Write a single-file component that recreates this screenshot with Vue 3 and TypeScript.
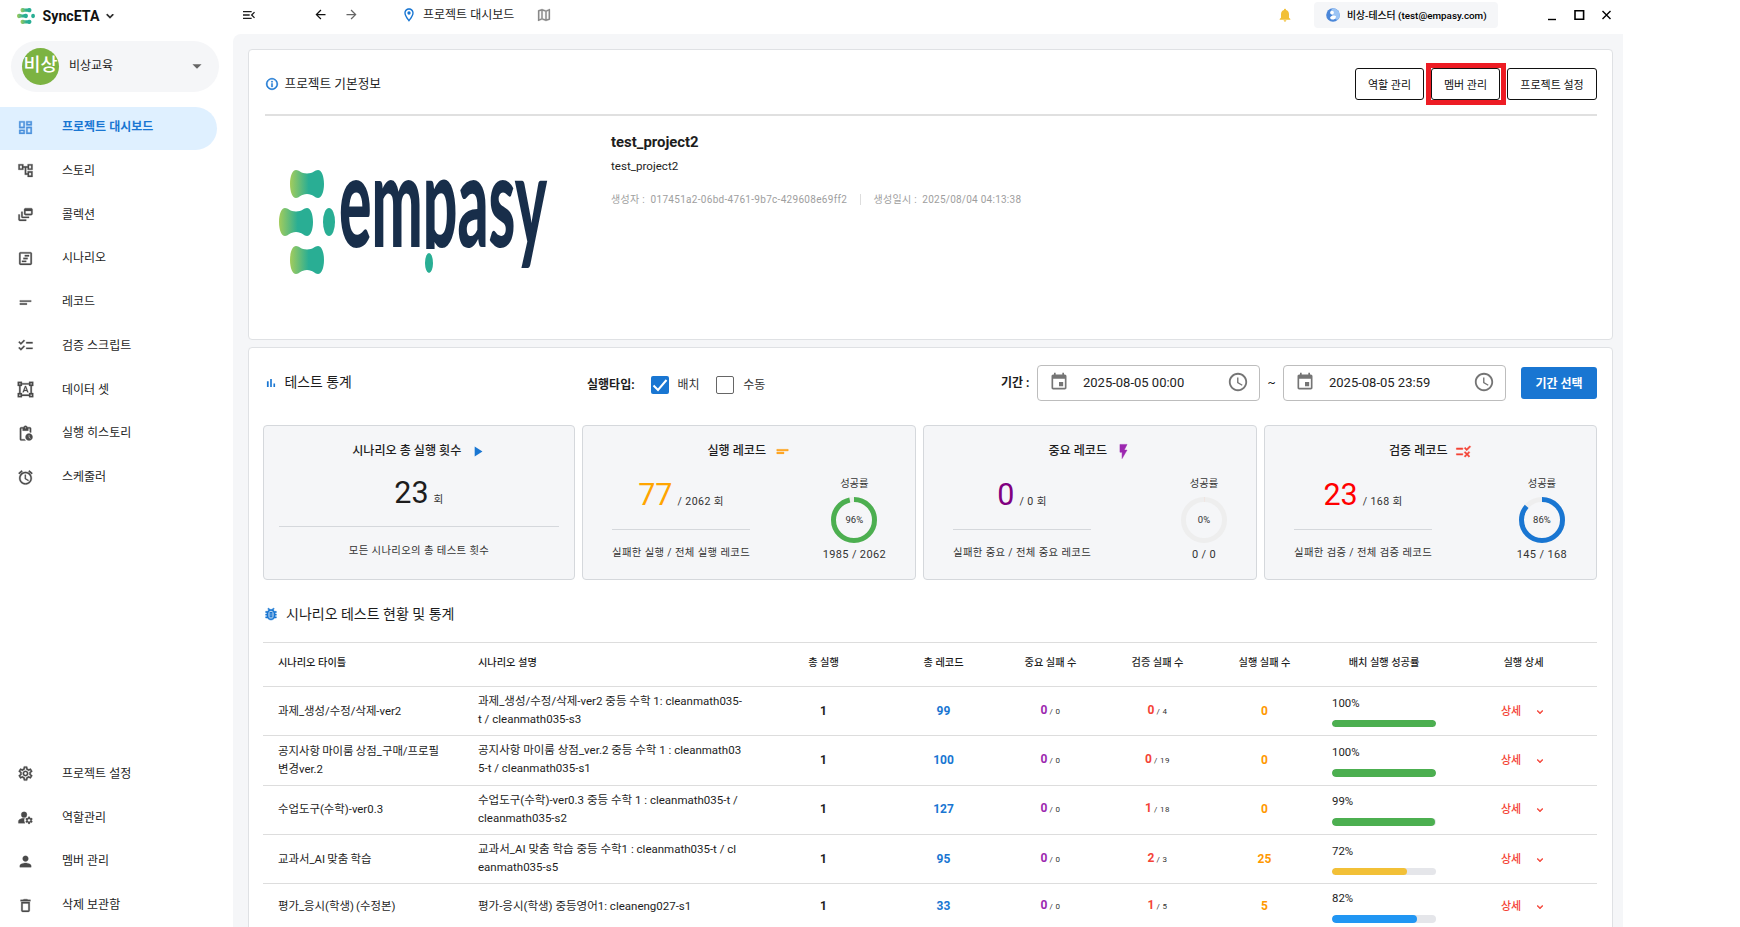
<script setup lang="ts">
interface NavItem { label: string; icon: string }
interface Scenario {
  title: string; desc: string[]; runs: number; records: number
  major: [number, number]; verify: [number, number]; failed: number
  rate: number; color: string
}
interface Stat {
  title: string; icon: string; tint: string; value: string; valueColor: string
  total: string; desc: string; rate: number; ratio: string
}

const icons: Record<string, string> = {
  dashboard: 'M19 5v2h-4V5h4M9 5v6H5V5h4m10 8v6h-4v-6h4M9 17v2H5v-2h4M21 3h-8v6h8V3zM11 3H3v10h8V3zm10 8h-8v10h8V11zm-10 4H3v6h8v-6z',
  tree: 'M22 11V3h-7v3H9V3H2v8h7V8h2v10h4v3h7v-8h-7v3h-2V8h2v3h7zM7 9H4V5h3v4zm10 6h3v4h-3v-4zm0-10h3v4h-3V5z',
  feed: 'M8 8H6v7c0 1.1.9 2 2 2h9v-2H8V8zM20 3h-8c-1.1 0-2 .9-2 2v6c0 1.1.9 2 2 2h8c1.1 0 2-.9 2-2V5c0-1.1-.9-2-2-2zm0 8h-8V7h8v4zM4 12H2v7c0 1.1.9 2 2 2h9v-2H4v-7z',
  scenario: 'M19 5v14H5V5h14m0-2H5c-1.1 0-2 .9-2 2v14c0 1.100.9 2 2 2h14c1.100 0 2-.9 2-2V5c0-1.100-.9-2-2-2zM11 7h6v2h-6zM9 11h6v2H9zM7 15h6v2H7z',
  short: 'M4 9h16v2H4zm0 4h10v2H4z',
  checklist: 'M22 7h-9v2h9V7zm0 8h-9v2h9v-2zM5.54 11L2 7.46l1.41-1.41 2.12 2.12 4.24-4.24 1.41 1.41L5.54 11zm0 8L2 15.46l1.41-1.41 2.12 2.12 4.24-4.24 1.41 1.41L5.54 19z',
  rule: 'M16.54 11L13 7.46l1.41-1.41 2.12 2.12 4.24-4.24 1.41 1.41L16.54 11zM11 7H2v2h9V7zm10 6.41L19.59 12 17 14.59 14.41 12 13 13.41 15.59 16 13 18.59 14.41 20 17 17.41 19.59 20 21 18.59 18.41 16 21 13.41zM11 15H2v2h9v-2z',
  shapes: 'M23 7V1h-6v2H7V1H1v6h2v10H1v6h6v-2h10v2h6v-6h-2V7h2zM3 3h2v2H3V3zm2 18H3v-2h2v2zm12-2H7v-2H5V7h2V5h10v2h2v10h-2v2zm4 2h-2v-2h2v2zM19 5V3h2v2h-2zm-5.27 9h-3.49l-.73 2H7.89l3.4-9h1.4l3.41 9h-1.63l-.74-2zm-3.04-1.26h2.61L12 8.91l-1.31 3.83z',
  pending: 'M17 12c-2.76 0-5 2.24-5 5s2.24 5 5 5 5-2.24 5-5-2.24-5-5-5zm1.65 7.35L16.5 17.2V14h1v2.79l1.85 1.85-.7.71zM18 3h-3.18C14.4 1.84 13.3 1 12 1s-2.4.84-2.82 2H6c-1.1 0-2 .9-2 2v15c0 1.1.9 2 2 2h6.11c-.59-.57-1.07-1.25-1.42-2H6V5h2v3h8V5h2v5.08c.71.1 1.38.31 2 .6V5c0-1.1-.9-2-2-2zm-6 2c-.55 0-1-.45-1-1s.45-1 1-1 1 .45 1 1-.45 1-1 1z',
  alarm: 'M22 5.72l-4.6-3.86-1.29 1.53 4.6 3.86L22 5.72zM7.88 3.39L6.6 1.86 2 5.71l1.29 1.53 4.59-3.85zM12.5 8H11v6l4.75 2.85.75-1.23-4-2.37V8zM12 4c-4.97 0-9 4.03-9 9s4.02 9 9 9c4.97 0 9-4.03 9-9s-4.03-9-9-9zm0 16c-3.87 0-7-3.13-7-7s3.13-7 7-7 7 3.13 7 7-3.13 7-7 7z',
  settings: 'M19.43 12.98c.04-.32.07-.64.07-.98 0-.34-.03-.66-.07-.98l2.11-1.65c.19-.15.24-.42.12-.64l-2-3.46c-.09-.16-.26-.25-.44-.25-.06 0-.12.01-.17.03l-2.49 1c-.52-.4-1.08-.73-1.69-.98l-.38-2.65C14.46 2.18 14.25 2 14 2h-4c-.25 0-.46.18-.49.42l-.38 2.65c-.61.25-1.17.59-1.69.98l-2.49-1c-.06-.02-.12-.03-.18-.03-.17 0-.34.09-.43.25l-2 3.46c-.13.22-.07.49.12.64l2.11 1.65c-.04.32-.07.65-.07.98 0 .33.03.66.07.98l-2.11 1.65c-.19.15-.24.42-.12.64l2 3.46c.09.16.26.25.44.25.06 0 .12-.01.17-.03l2.49-1c.52.4 1.08.73 1.69.98l.38 2.65c.03.24.24.42.49.42h4c.25 0 .46-.18.49-.42l.38-2.65c.61-.25 1.17-.59 1.69-.98l2.49 1c.06.02.12.03.18.03.17 0 .34-.09.43-.25l2-3.46c.12-.22.07-.49-.12-.64l-2.11-1.65zm-1.98-1.71c.04.31.05.52.05.73 0 .21-.02.43-.05.73l-.14 1.13.89.7 1.08.84-.7 1.21-1.27-.51-1.04-.42-.9.68c-.43.32-.84.56-1.25.73l-1.06.43-.16 1.13-.2 1.35h-1.4l-.19-1.35-.16-1.13-1.06-.43c-.43-.18-.83-.41-1.23-.71l-.91-.7-1.06.43-1.27.51-.7-1.21 1.08-.84.89-.7-.14-1.13c-.03-.31-.05-.54-.05-.74s.02-.43.05-.73l.14-1.13-.89-.7-1.08-.84.7-1.21 1.27.51 1.04.42.9-.68c.43-.32.84-.56 1.25-.73l1.06-.43.16-1.13.2-1.35h1.39l.19 1.35.16 1.13 1.06.43c.43.18.83.41 1.23.71l.91.7 1.06-.43 1.27-.51.7 1.21-1.07.85-.89.7.14 1.13zM12 8c-2.21 0-4 1.79-4 4s1.79 4 4 4 4-1.79 4-4-1.79-4-4-4zm0 6c-1.1 0-2-.9-2-2s.9-2 2-2 2 .9 2 2-.9 2-2 2z',
  manage: 'M10 4a4 4 0 1 0 0 8 4 4 0 1 0 0-8zM10.67 13.02C10.45 13.01 10.23 13 10 13c-2.42 0-4.68.67-6.61 1.82-.88.52-1.39 1.5-1.39 2.53V20h9.26A6.96 6.96 0 0 1 10 16c0-1.07.25-2.07.67-2.98zM20.75 16c0-.22-.03-.42-.06-.63l1.14-1.01-1-1.73-1.45.49c-.32-.27-.68-.48-1.08-.63L18 11h-2l-.3 1.49c-.4.15-.76.36-1.08.63l-1.45-.49-1 1.73 1.14 1.01c-.03.21-.06.41-.06.63s.03.42.06.63l-1.14 1.01 1 1.73 1.45-.49c.32.27.68.48 1.08.63L16 21h2l.3-1.49c.4-.15.76-.36 1.08-.63l1.45.49 1-1.73-1.14-1.01c.03-.21.06-.41.06-.63zM17 18c-1.1 0-2-.9-2-2s.9-2 2-2 2 .9 2 2-.9 2-2 2z',
  person: 'M12 12c2.21 0 4-1.79 4-4s-1.79-4-4-4-4 1.790-4 4 1.790 4 4 4zm0 2c-2.670 0-8 1.340-8 4v2h16v-2c0-2.660-5.330-4-8-4z',
  trash: 'M6 19c0 1.1.9 2 2 2h8c1.1 0 2-.9 2-2V7H6v12zM8 9h8v10H8V9zm7.5-5l-1-1h-5l-1 1H5v2h14V4z',
  event: 'M17 12h-5v5h5v-5zM16 1v2H8V1H6v2H5c-1.11 0-1.99.9-1.99 2L3 19c0 1.1.89 2 2 2h14c1.1 0 2-.9 2-2V5c0-1.1-.9-2-2-2h-1V1h-2zm3 18H5V8h14v11z',
  clock: 'M11.99 2C6.47 2 2 6.48 2 12s4.47 10 9.99 10C17.52 22 22 17.52 22 12S17.52 2 11.99 2zM12 20c-4.42 0-8-3.58-8-8s3.58-8 8-8 8 3.58 8 8-3.58 8-8 8zm.5-13H11v6l5.25 3.15.75-1.23-4.5-2.67z',
  bell: 'M12 22c1.1 0 2-.9 2-2h-4c0 1.1.89 2 2 2zm6-6v-5c0-3.07-1.64-5.64-4.5-6.32V4c0-.83-.67-1.5-1.5-1.5s-1.5.67-1.5 1.5v.68C7.63 5.36 6 7.92 6 11v5l-2 2v1h16v-1l-2-2z',
  map: 'M20.5 3l-.16.03L15 5.100 9 3 3.360 4.900c-.21.07-.36.25-.36.48V20.500c0 .28.22.5.5.5l.16-.03L9 18.900l6 2.100 5.640-1.900c.21-.07.36-.25.36-.48V3.500c0-.28-.22-.5-.5-.5zM10 5.470l4 1.400v11.660l-4-1.400V5.470zm-5 .99l3-1.010v11.700l-3 1.160V6.460zm14 11.080l-3 1.010V6.860l3-1.160v11.840z',
  place: 'M12 2C8.13 2 5 5.13 5 9c0 5.25 7 13 7 13s7-7.75 7-13c0-3.87-3.13-7-7-7zM7 9c0-2.76 2.24-5 5-5s5 2.24 5 5c0 2.88-2.88 7.19-5 9.88C9.92 16.21 7 11.85 7 9zM12 6.500a2.500 2.500 0 1 0 0 5 2.500 2.500 0 1 0 0-5z',
  info: 'M11 7h2v2h-2zm0 4h2v6h-2zm1-9C6.480 2 2 6.480 2 12s4.480 10 10 10 10-4.480 10-10S17.520 2 12 2zm0 18c-4.410 0-8-3.590-8-8s3.590-8 8-8 8 3.590 8 8-3.590 8-8 8z',
  menuOpen: 'M3 18h13v-2H3v2zm0-5h10v-2H3v2zm0-7v2h13V6H3zm18 9.590L17.420 12 21 8.410 19.590 7l-5 5 5 5L21 15.590z',
  back: 'M20 11H7.830l5.590-5.590L12 4l-8 8 8 8 1.410-1.410L7.830 13H20v-2z',
  forward: 'M12 4l-1.410 1.410L16.170 11H4v2h12.170l-5.580 5.590L12 20l8-8z',
  chevron: 'M7.410 8.590L12 13.170l4.590-4.580L18 10l-6 6-6-6 1.410-1.410z',
  dropdown: 'M7 10l5 5 5-5z',
  bars: 'M5 9.2h3V19H5zM10.6 5h2.8v14h-2.8zm5.6 8H19v6h-2.8z',
  play: 'M8 5v14l11-7z',
  flash: 'M7 2v11h3v9l7-12h-4l4-8z',
  bug: 'M20 8h-2.810c-.45-.78-1.070-1.450-1.820-1.960L17 4.410 15.590 3l-2.170 2.170C12.960 5.060 12.490 5 12 5s-.96.06-1.410.17L8.410 3 7 4.410l1.620 1.630C7.880 6.550 7.260 7.220 6.810 8H4v2h2.090c-.05.33-.09.66-.09 1v1H4v2h2v1c0 .34.04.67.09 1H4v2h2.810c1.040 1.790 2.970 3 5.190 3s4.150-1.210 5.190-3H20v-2h-2.090c.05-.33.09-.66.09-1v-1h2v-2h-2v-1c0-.34-.04-.67-.09-1H20V8zm-4 7c0 2.200-1.800 4-4 4s-4-1.800-4-4v-4c0-2.200 1.800-4 4-4s4 1.800 4 4v4zM10 9h4v8h-4zM11.500 10.500v5h1v-5z',
}

const mainNav: NavItem[] = [
  { label: '프로젝트 대시보드', icon: 'dashboard' },
  { label: '스토리', icon: 'tree' },
  { label: '콜렉션', icon: 'feed' },
  { label: '시나리오', icon: 'scenario' },
  { label: '레코드', icon: 'short' },
  { label: '검증 스크립트', icon: 'checklist' },
  { label: '데이터 셋', icon: 'shapes' },
  { label: '실행 히스토리', icon: 'pending' },
  { label: '스케줄러', icon: 'alarm' },
]
const footNav: NavItem[] = [
  { label: '프로젝트 설정', icon: 'settings' },
  { label: '역할관리', icon: 'manage' },
  { label: '멤버 관리', icon: 'person' },
  { label: '삭제 보관함', icon: 'trash' },
]
const stats: Stat[] = [
  { title: '실행 레코드', icon: 'short', tint: '#ff9800', value: '77', valueColor: '#ffa500', total: '/ 2062 회', desc: '실패한 실행 / 전체 실행 레코드', rate: 96, ratio: '1985 / 2062' },
  { title: '중요 레코드', icon: 'flash', tint: '#9c27b0', value: '0', valueColor: '#800080', total: '/ 0 회', desc: '실패한 중요 / 전체 중요 레코드', rate: 0, ratio: '0 / 0' },
  { title: '검증 레코드', icon: 'rule', tint: '#f44336', value: '23', valueColor: '#ff0000', total: '/ 168 회', desc: '실패한 검증 / 전체 검증 레코드', rate: 86, ratio: '145 / 168' },
]
const ringColor = (rate: number): string => (rate > 90 ? '#4caf50' : rate > 0 ? '#1976d2' : '#f3dcd4')
const ringLength = 2 * Math.PI * 20.5
const ringDash = (rate: number): string => `${(Math.max(rate, 0.4) / 100) * ringLength} ${ringLength}`

const headers = ['시나리오 타이틀', '시나리오 설명', '총 실행', '총 레코드', '중요 실패 수', '검증 실패 수', '실행 실패 수', '배치 실행 성공률', '실행 상세']
const rows: Scenario[] = [
  { title: '과제_생성/수정/삭제-ver2', desc: ['과제_생성/수정/삭제-ver2 중등 수학 1: cleanmath035-', 't / cleanmath035-s3'], runs: 1, records: 99, major: [0, 0], verify: [0, 4], failed: 0, rate: 100, color: '#4caf50' },
  { title: '공지사항 마이룸 상점_구매/프로필 변경ver.2', desc: ['공지사항 마이룸 상점_ver.2 중등 수학 1 : cleanmath03', '5-t / cleanmath035-s1'], runs: 1, records: 100, major: [0, 0], verify: [0, 19], failed: 0, rate: 100, color: '#4caf50' },
  { title: '수업도구(수학)-ver0.3', desc: ['수업도구(수학)-ver0.3 중등 수학 1 : cleanmath035-t /', 'cleanmath035-s2'], runs: 1, records: 127, major: [0, 0], verify: [1, 18], failed: 0, rate: 99, color: '#4caf50' },
  { title: '교과서_AI 맞춤 학습', desc: ['교과서_AI 맞춤 학습 중등 수학1 : cleanmath035-t / cl', 'eanmath035-s5'], runs: 1, records: 95, major: [0, 0], verify: [2, 3], failed: 25, rate: 72, color: '#f2c037' },
  { title: '평가_응시(학생) (수정본)', desc: ['평가-응시(학생) 중등영어1: cleaneng027-s1'], runs: 1, records: 33, major: [0, 0], verify: [1, 5], failed: 5, rate: 82, color: '#2196f3' },
]
</script>

<template>
  <div class="app">
    <aside class="side">
      <div class="brand">
        <svg class="brand-mark" viewBox="0 0 56 104" preserveAspectRatio="none">
          <use href="#mark" />
        </svg>
        <span>SyncETA</span>
        <svg class="i14" viewBox="0 0 24 24"><path :d="icons.chevron" stroke="currentColor" /></svg>
      </div>
      <div class="org">
        <span class="avatar">비상</span>
        <span class="org-name">비상교육</span>
        <svg class="i22" viewBox="0 0 24 24"><path :d="icons.dropdown" /></svg>
      </div>
      <nav class="nav">
        <a v-for="(n, i) in mainNav" :key="n.label" class="nav-item" :class="{ active: i === 0 }">
          <svg class="i17" viewBox="0 0 24 24"><path :d="icons[n.icon]" /></svg><span>{{ n.label }}</span>
        </a>
      </nav>
      <nav class="nav foot">
        <a v-for="n in footNav" :key="n.label" class="nav-item">
          <svg class="i17" viewBox="0 0 24 24"><path :d="icons[n.icon]" /></svg><span>{{ n.label }}</span>
        </a>
      </nav>
    </aside>

    <div class="body">
      <header class="top">
        <svg class="i16 t-menu" viewBox="0 0 24 24"><path :d="icons.menuOpen" /></svg>
        <svg class="i15 t-back" viewBox="0 0 24 24"><path :d="icons.back" /></svg>
        <svg class="i15 t-fwd" viewBox="0 0 24 24"><path :d="icons.forward" /></svg>
        <svg class="i16 t-pin" viewBox="0 0 24 24"><path :d="icons.place" /></svg>
        <span class="crumb">프로젝트 대시보드</span>
        <svg class="i16 t-map" viewBox="0 0 24 24"><path :d="icons.map" /></svg>
        <svg class="i16 t-bell" viewBox="0 0 24 24"><path :d="icons.bell" /></svg>
        <div class="user">
          <svg class="globe" viewBox="0 0 14 14">
            <circle cx="7" cy="7" r="6.8" fill="#4a86d8" />
            <path d="M7 .2A6.800 6.800 0 0 1 13.800 7c0 2-1 3.800-2.400 5C8 11 6 8 5 5 4.500 3 5.500 1 7 .2z" fill="#9cc4f4" />
            <circle cx="6" cy="4.600" r="1.900" fill="#fff" />
            <path d="M4 9.800c1-2 4-3 6-1.600 0 2-1.500 3.400-3.400 3.400C5.300 11.600 4.300 11 4 9.800z" fill="#fff" />
          </svg>
          <span>비상-테스터 (test@empasy.com)</span>
        </div>
        <svg class="win" viewBox="0 0 64 12" fill="none" stroke="#000">
          <path d="M0 10.500h8" stroke-width="1.400" />
          <path d="M27 1.800h8.600v8.400H27z" stroke-width="1.600" />
          <path d="M54.500 2l8 8m0-8l-8 8" stroke-width="1.400" />
        </svg>
      </header>

      <main class="main">
        <section class="card project">
          <div class="head">
            <svg class="i14 blue bold" viewBox="0 0 24 24"><path :d="icons.info" /></svg>
            <h2 class="h13">프로젝트 기본정보</h2>
            <div class="actions">
              <button>역할 관리</button>
              <button class="marked">멤버 관리</button>
              <button class="wide">프로젝트 설정</button>
            </div>
          </div>
          <div class="project-body">
            <svg class="logo" viewBox="0 0 272 110">
              <defs>
                <linearGradient id="leaf" x1="0" x2="1" y1="0" y2="0">
                  <stop offset="0" stop-color="#a3cc5c" />
                  <stop offset=".55" stop-color="#29ae94" />
                  <stop offset="1" stop-color="#29ae94" />
                </linearGradient>
                <path id="bone" d="M6 0C9 0 11 3.500 17 3.500S25 0 28 0c3.500 0 6 6 6 14s-2.500 14-6 14c-3 0-5-4-11-4S9 28 6 28C2.500 28 0 22 0 14S2.500 0 6 0z" />
                <g id="mark">
                  <use href="#bone" x="11" y="0" fill="url(#leaf)" />
                  <use href="#bone" x="0" y="38" fill="url(#leaf)" />
                  <use href="#bone" x="11" y="76" fill="url(#leaf)" />
                  <ellipse cx="50" cy="52" rx="6" ry="14" fill="#29ae94" />
                </g>
              </defs>
              <use href="#mark" />
              <g transform="translate(0 77) scale(1 2.120)">
                <text class="wordmark" x="60" y="0" textLength="208" lengthAdjust="spacingAndGlyphs">empasy</text>
              </g>
              <path d="M142 79h22v26h-22z" fill="#fff" />
              <ellipse cx="150" cy="93" rx="4" ry="10" fill="#29ae94" />
            </svg>
            <div class="about">
              <h1>test_project2</h1>
              <p>test_project2</p>
              <div class="meta">
                <span>생성자 :&nbsp; 017451a2-06bd-4761-9b7c-429608e69ff2</span>
                <i></i>
                <span>생성일시 :&nbsp; 2025/08/04 04:13:38</span>
              </div>
            </div>
          </div>
        </section>

        <section class="card tests">
          <div class="filters">
            <svg class="i14 blue" viewBox="0 0 24 24"><path :d="icons.bars" /></svg>
            <h2 class="h14 up">테스트 통계</h2>
            <div class="types">
              <b>실행타입:</b>
              <span class="box on"><svg viewBox="0 0 18 18"><path d="M2.500 9.500l4.500 4.500L15.500 4" fill="none" stroke="#fff" stroke-width="2" /></svg></span>
              <span class="lbl first">배치</span>
              <span class="box"></span>
              <span class="lbl">수동</span>
            </div>
            <b class="period">기간 :</b>
            <div class="field">
              <svg class="i20" viewBox="0 0 24 24"><path :d="icons.event" /></svg>
              <span>2025-08-05 00:00</span>
              <svg class="i22" viewBox="0 0 24 24"><path :d="icons.clock" /></svg>
            </div>
            <span class="tilde">~</span>
            <div class="field">
              <svg class="i20" viewBox="0 0 24 24"><path :d="icons.event" /></svg>
              <span>2025-08-05 23:59</span>
              <svg class="i22" viewBox="0 0 24 24"><path :d="icons.clock" /></svg>
            </div>
            <button class="primary">기간 선택</button>
          </div>

          <div class="stats">
            <div class="stat total">
              <div class="stat-title"><span>시나리오 총 실행 횟수</span><svg class="i17 blue" viewBox="0 0 24 24"><path :d="icons.play" /></svg></div>
              <div class="count"><span class="num">23</span><small>회</small></div>
              <hr />
              <p>모든 시나리오의 총 테스트 횟수</p>
            </div>
            <div v-for="s in stats" :key="s.title" class="stat">
              <div class="stat-title">
                <span>{{ s.title }}</span>
                <svg class="i17 bold" viewBox="0 0 24 24" :style="{ color: s.tint }"><path :d="icons[s.icon]" /></svg>
              </div>
              <div class="split">
                <div class="left">
                  <div class="count"><span class="num" :style="{ color: s.valueColor }">{{ s.value }}</span><small>{{ s.total }}</small></div>
                  <hr />
                  <p>{{ s.desc }}</p>
                </div>
                <div class="right">
                  <span>성공률</span>
                  <div class="ring">
                    <svg viewBox="0 0 46 46" fill="none" stroke-width="5">
                      <circle cx="23" cy="23" r="20.5" stroke="#eeeeee" />
                      <circle cx="23" cy="23" r="20.5" :stroke="ringColor(s.rate)" :stroke-dasharray="ringDash(s.rate)" transform="rotate(-90 23 23)" />
                    </svg>
                    <em>{{ s.rate }}%</em>
                  </div>
                  <span class="ratio">{{ s.ratio }}</span>
                </div>
              </div>
            </div>
          </div>

          <div class="sub">
            <svg class="i16 blue bold" viewBox="0 0 24 24"><path :d="icons.bug" /></svg>
            <h2 class="h14">시나리오 테스트 현황 및 통계</h2>
          </div>

          <div class="table">
            <div class="row hd">
              <span v-for="(h, i) in headers" :key="h" :class="{ c: i > 1 }">{{ h }}</span>
            </div>
            <div v-for="r in rows" :key="r.title" class="row" :class="{ single: r.desc.length === 1 }">
              <span class="title">{{ r.title }}</span>
              <span class="desc"><span v-for="d in r.desc" :key="d" class="line">{{ d }}</span></span>
              <span class="c n">{{ r.runs }}</span>
              <span class="c n rec">{{ r.records }}</span>
              <span class="c n maj">{{ r.major[0] }}<small>/ {{ r.major[1] }}</small></span>
              <span class="c n ver">{{ r.verify[0] }}<small>/ {{ r.verify[1] }}</small></span>
              <span class="c n fail">{{ r.failed }}</span>
              <span class="rate">
                <span>{{ r.rate }}%</span>
                <span class="track"><span class="fill" :style="{ width: r.rate + '%', background: r.color }"></span></span>
              </span>
              <span class="c detail">상세<svg class="i12" viewBox="0 0 24 24"><path :d="icons.chevron" stroke="currentColor" /></svg></span>
            </div>
          </div>
        </section>
      </main>
    </div>
  </div>
</template>

<style>
html, body { background: #fff; overflow: hidden; }
</style>

<style scoped>
* { box-sizing: border-box; }
.app { display: flex; width: 1740px; height: 927px; overflow: hidden; font-family: Roboto, "Noto Sans CJK KR", sans-serif; font-size: 12px; color: #1d1d1d; background: #fff; }
svg { display: block; flex: none; fill: currentColor; }
svg[fill="none"] { fill: none; }
h1, h2, p { margin: 0; font-weight: 400; }
button { font-family: inherit; padding: 0; }
.i12 { width: 12px; height: 12px; } .i14 { width: 14px; height: 14px; } .i15 { width: 15px; height: 15px; }
.i16 { width: 16px; height: 16px; } .i17 { width: 17px; height: 17px; } .i20 { width: 20px; height: 20px; } .i22 { width: 22px; height: 22px; }
.blue { color: #1976d2; }
.bold { stroke: currentColor; stroke-width: .7; }

.side { width: 233px; flex: none; display: flex; flex-direction: column; }
.brand { height: 31px; display: flex; align-items: center; padding-left: 17px; font-size: 14.200px; font-weight: 700; color: #111; }
.brand-mark { width: 18px; height: 16px; margin-right: 7.500px; }
.brand .i14 { margin-left: 3.500px; }
.org { width: 208px; height: 51px; margin: 10px 0 0 11px; padding: 0 11px 0 11px; border-radius: 26px; background: #f5f6f8; display: flex; align-items: center; }
.avatar { width: 37px; height: 37px; border-radius: 50%; background: #7cb342; color: #fff; font-size: 18.500px; font-weight: 500; line-height: 35px; text-align: center; white-space: nowrap; }
.org-name { margin-left: 10px; flex: 1; line-height: 18px; padding-bottom: 2px; }
.org .i22 { color: #666; margin-bottom: 2px; }
.nav { margin-top: 15px; }
.nav-item { display: flex; align-items: center; width: 217px; height: 43.750px; padding-left: 16.500px; border-radius: 0 22px 22px 0; line-height: 18px; }
.nav-item .i17 { color: #4a4a4a; stroke: currentColor; stroke-width: .4; }
.nav-item span { margin-left: 28.500px; }
.nav-item.active { height: 43px; padding-bottom: 3px; background: #dff0ff; color: #1976d2; font-weight: 700; margin-bottom: -1px; }
.nav-item.active .i17 { color: #4a90dc; }
.foot { margin-top: auto; }

.body { width: 1390px; flex: none; display: flex; flex-direction: column; }
.top { height: 34px; flex: none; display: flex; align-items: center; padding-bottom: 5px; }
.t-menu { margin-left: 8px; }
.t-back { margin-left: 56px; color: #111; }
.t-fwd { margin-left: 16px; color: #666; }
.t-pin { margin-left: 41.500px; color: #1976d2; }
.crumb { margin-left: 6.500px; width: 92px; white-space: nowrap; line-height: 18px; padding-top: 1px; }
.t-map { margin-left: 21px; color: #888; stroke: currentColor; stroke-width: .4; }
.t-bell { margin-left: 725px; color: #f2c037; }
.user { margin-left: 21px; width: 184px; height: 26px; border-radius: 4px; background: #f5f6f8; display: flex; align-items: center; padding-left: 12px; font-size: 9.850px; font-weight: 500; color: #000; white-space: nowrap; }
.globe { width: 14px; height: 14px; margin-right: 7px; }
.win { width: 64px; height: 12px; margin-left: 50px; }

.main { flex: 1; min-height: 0; background: #f5f6f8; border-radius: 8px 0 0 0; padding: 15px 10px 0 15px; }
.card { background: #fff; border: 1px solid #dfe1e4; border-radius: 4px; }
.project { height: 291px; padding: 0 15px 0 16px; }
.head { height: 66px; border-bottom: 2px solid #e0e0e0; display: flex; align-items: center; padding-top: 3px; }
.h13 { font-size: 12.700px; margin-left: 5.500px; line-height: 20px; }
.h14 { font-size: 14px; margin-left: 7px; line-height: 20px; }
.h14.up { padding-bottom: 2px; margin-left: 6.500px; font-size: 13.900px; }
.actions { margin-left: auto; display: flex; gap: 7px; }
.actions button { position: relative; width: 69px; height: 32px; background: #fff; border: 1px solid #111; border-radius: 3px; font-size: 11px; color: #111; white-space: nowrap; }
.actions .wide { width: 90px; }
.marked::after { content: ""; position: absolute; inset: -6px -7px -6px -6px; border: 5px solid #ed1c24; }
.project-body { display: flex; }
.logo { width: 272px; height: 110px; margin: 54px 0 0 14px; overflow: visible; }
.wordmark { font-family: Lato, sans-serif; font-weight: 900; font-size: 60px; fill: #182e4a; }
.about { margin: 15.500px 0 0 60px; }
.about h1 { font-size: 14.900px; font-weight: 700; line-height: 20px; }
.about p { margin-top: 5.500px; line-height: 18px; font-size: 11.600px; }
.meta { margin-top: 17px; display: flex; align-items: center; font-size: 10px; line-height: 15px; letter-spacing: .3px; color: #9e9e9e; white-space: nowrap; }
.meta i { width: 1px; height: 11px; background: #ddd; margin: 0 13px 0 12.500px; }
.meta span:last-child { letter-spacing: .25px; }

.tests { margin-top: 7px; height: 600px; padding: 0 15px 0 14px; }
.filters { height: 77px; display: flex; align-items: center; padding-bottom: 7px; padding-left: 1px; }
.types { display: flex; align-items: center; width: 414px; margin-left: 235.200px; line-height: 18px; padding-top: 3px; }
.box { width: 18px; height: 18px; border: 1px solid #666; border-radius: 2px; margin-left: 16px; }
.box.on { border: 0; background: #1976d2; }
.lbl { margin-left: 9px; color: #333; }
.lbl.first { margin-right: .5px; }
.period { width: 36px; line-height: 18px; margin-left: auto; }
.field { width: 223px; flex: none; height: 36px; border: 1px solid #bdbdbd; border-radius: 4px; display: flex; align-items: center; padding: 0 10px 2px 11px; font-size: 13px; color: #222; }
.field span { flex: 1; margin-left: 14px; white-space: nowrap; }
.field svg { color: #757575; }
.tilde { width: 23px; flex: none; text-align: center; }
.primary { margin-left: 15px; width: 76px; flex: none; height: 32px; border: 0; border-radius: 3px; background: #1976d2; color: #fff; font-size: 12px; font-weight: 700; padding-bottom: 2px; }

.stats { display: grid; grid-template-columns: 312px 334px 334px 333px; gap: 7px; }
.stat { height: 155px; background: #f5f6f8; border: 1px solid #d5d8dc; border-radius: 4px; padding: 14px 29px 0; }
.stat.total { padding: 14px 15px 0; text-align: center; }
.stat-title { display: flex; justify-content: center; align-items: center; gap: 7.500px; height: 22px; font-weight: 500; line-height: 18px; font-size: 12.100px; }
.count { white-space: nowrap; text-align: center; height: 42px; line-height: 36px; }
.num { font-size: 30.500px; }
small { font-size: 10.600px; letter-spacing: .4px; margin-left: 5px; color: #333; }
.stat hr { border: 0; border-top: 1px solid #d5d8dc; margin: 0; }
.stat p { font-size: 10.350px; letter-spacing: .38px; line-height: 16px; color: #333; white-space: nowrap; }
.total .count { margin-top: 13px; }
.total hr { margin-top: 9px; }
.total p { margin-top: 16px; }
.split { display: flex; justify-content: space-between; }
.left { padding-top: 15px; }
.left hr { margin-top: 10px; }
.left p { margin-top: 15px; }
.right { display: flex; flex-direction: column; align-items: center; padding-top: 14px; font-size: 10.300px; line-height: 16px; color: #333; }
.ring { position: relative; width: 46px; height: 46px; margin-top: 5px; }
.ring em { position: absolute; inset: 0; font-style: normal; font-size: 9.500px; line-height: 46px; text-align: center; }
.ratio { font-size: 11px; letter-spacing: .35px; margin-top: 4px; }

.sub { height: 62px; display: flex; align-items: center; padding-top: 6px; }
.sub .h14 { margin-left: 7px; padding-bottom: 1px; }
.table { border-top: 1px solid #ddd; font-size: 11.400px; line-height: 18px; }
.row { display: grid; grid-template-columns: 200px 294px 133px 107px 107px 107px 107px 132px 147px; align-items: center; height: 49.300px; padding-bottom: 1px; border-bottom: 1px solid #ddd; }
.row > span { padding-left: 15px; }
.row > .c { padding: 0; text-align: center; }
.row > .desc { font-size: 11.500px; padding-bottom: 1px; }
.row.hd { height: 44px; padding-bottom: 3px; font-size: 10.200px; font-weight: 500; }
.single { height: 46px; }
.title { padding-right: 10px; word-break: keep-all; word-spacing: -.6px; }
.line { display: block; white-space: nowrap; }
.n { font-size: 12px; font-weight: 700; }
.n small { font-size: 8px; font-weight: 400; margin-left: 2px; }
.rec { color: #1976d2; } .maj { color: #9c27b0; } .ver { color: #f44336; } .fail { color: #ff9800; }
.row > .rate { padding-left: 14px; }
.rate > span { display: block; }
.rate .track { width: 104px; height: 7.500px; margin-top: 8px; border-radius: 4px; background: #e5e6ea; overflow: hidden; }
.fill { display: block; height: 100%; border-radius: 4px; }
.row > .detail { display: flex; align-items: center; justify-content: center; gap: 13px; padding-top: 2px; color: #f44336; font-size: 11px; font-weight: 500; }
</style>
